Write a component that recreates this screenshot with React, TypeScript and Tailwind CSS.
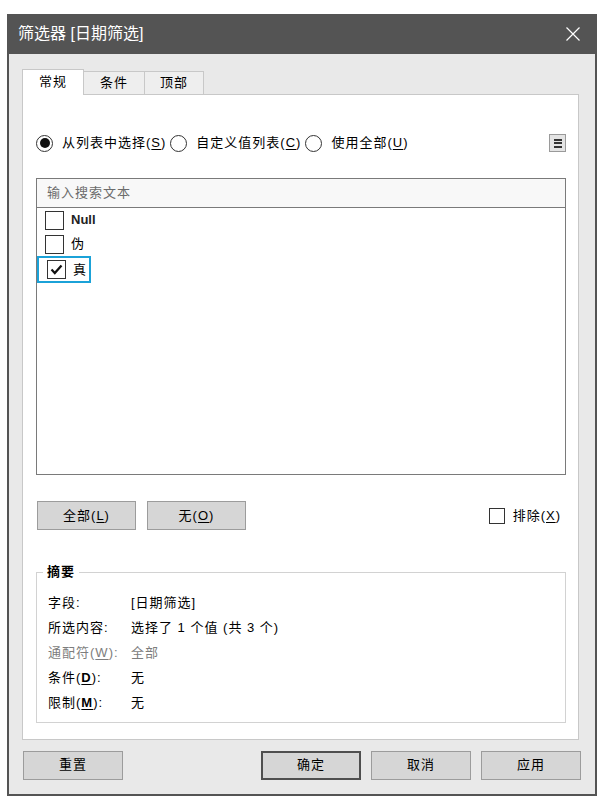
const FONT = "font-['Liberation_Sans','Noto_Sans_CJK_SC',sans-serif]";

function Radio({ on }: { on?: boolean }) {
  return (
    <span className="flex h-[17px] w-[17px] shrink-0 items-center justify-center rounded-full border border-[#333] bg-white">
      {on && <span className="h-[10px] w-[10px] rounded-full bg-[#111]" />}
    </span>
  );
}

function Box({ on, size = 19 }: { on?: boolean; size?: number }) {
  return (
    <span
      className="flex shrink-0 items-center justify-center border border-[#333] bg-white"
      style={{ width: size, height: size }}
    >
      {on && (
        <svg width="13" height="11" viewBox="0 0 13 11">
          <path d="M1.5 5.5 L4.8 9 L11.5 1.5" fill="none" stroke="#111" strokeWidth="2.2" />
        </svg>
      )}
    </span>
  );
}

function Btn({ children, w, main }: { children: React.ReactNode; w: string; main?: boolean }) {
  return (
    <button
      className={`flex h-[29px] ${w} items-center justify-center bg-[#d6d6d6] text-[13px] tracking-[1px] text-black ${
        main ? "border-2 border-[#4f4f4f]" : "border border-[#9c9c9c]"
      }`}
    >
      {children}
    </button>
  );
}

const U = ({ c }: { c: string }) => <span className="underline underline-offset-2">{c}</span>;

export default function App() {
  const items = [
    { label: "Null", on: false, latin: true },
    { label: "伪", on: false },
    { label: "真", on: true },
  ];

  return (
    <div className={`h-[805px] w-[603px] bg-white pl-[7px] pt-[14px] ${FONT}`}>
      <div className="flex h-[782px] w-[590px] flex-col">
        {/* title bar */}
        <div className="flex h-[40px] shrink-0 items-center justify-between bg-[#545454] pl-[11px] pr-[17px] text-[16px] text-white">
          <span>筛选器 [日期筛选]</span>
          <svg width="14" height="14" viewBox="0 0 14 14">
            <path d="M0.5 0.5 L13.5 13.5 M13.5 0.5 L0.5 13.5" stroke="#fff" strokeWidth="1.2" />
          </svg>
        </div>

        <div className="flex flex-1 flex-col border-x-2 border-b-2 border-[#545454] bg-[#e9e9e9] pl-[13px] pr-[16px] pt-[15px]">
          {/* tabs */}
          <div className="relative z-10 -mb-px flex h-[26px] items-end text-[13px] tracking-[1px] text-black">
            <div className="flex h-[26px] w-[62px] items-center justify-center border border-b-0 border-[#c8c8c8] bg-white pb-[2px]">
              常规
            </div>
            <div className="flex h-[24px] w-[61px] items-center justify-center border border-l-0 border-[#c8c8c8] bg-[#eeeeee]">
              条件
            </div>
            <div className="flex h-[24px] w-[59px] items-center justify-center border border-l-0 border-[#c8c8c8] bg-[#eeeeee]">
              顶部
            </div>
          </div>

          {/* panel */}
          <div className="flex h-[646px] flex-col border border-[#c8c8c8] bg-white pl-[13px] pr-[12px] text-[13px] tracking-[1px] text-black">
            <div className="mt-[39px] flex h-[18px] items-center">
              <Radio on />
              <span className="ml-[9px]">
                从列表中选择(<U c="S" />)
              </span>
              <span className="ml-[4px]">
                <Radio />
              </span>
              <span className="ml-[9px]">
                自定义值列表(<U c="C" />)
              </span>
              <span className="ml-[4px]">
                <Radio />
              </span>
              <span className="ml-[9px]">
                使用全部(<U c="U" />)
              </span>
              <span className="ml-auto flex h-[18px] w-[17px] flex-col items-center justify-center gap-[1.5px] border border-[#9a9a9a] bg-[#e4e4e4]">
                <span className="h-[2px] w-[8px] bg-[#333]" />
                <span className="h-[2px] w-[8px] bg-[#333]" />
                <span className="h-[2px] w-[8px] bg-[#333]" />
              </span>
            </div>

            {/* list */}
            <div className="mt-[26px] flex h-[297px] flex-col border border-[#7a7a7a]">
              <div className="flex h-[29px] shrink-0 items-center border-b border-[#7a7a7a] bg-[#f8f8f8] pl-[10px] text-[#6b6b6b]">
                输入搜索文本
              </div>
              <div className="flex flex-col">
                {items.map((it) => (
                  <div
                    key={it.label}
                    className={`flex w-[54px] items-center pl-[8px] ${
                      it.on ? "h-[27px] border-2 border-[#1ba2d8] pl-[6px]" : "h-[24px]"
                    }`}
                  >
                    <Box on={it.on} />
                    <span className={`ml-[7px] ${it.latin ? "font-semibold tracking-normal text-[#222]" : ""}`}>
                      {it.label}
                    </span>
                  </div>
                ))}
              </div>
            </div>

            {/* select buttons */}
            <div className="mt-[26px] flex h-[29px] items-center">
              <Btn w="w-[99px] ml-px">
                全部(<U c="L" />)
              </Btn>
              <span className="ml-[11px]">
                <Btn w="w-[99px]">
                  无(<U c="O" />)
                </Btn>
              </span>
              <span className="ml-auto mr-[5px] flex items-center">
                <Box size={16} />
                <span className="ml-[8px]">
                  排除(<U c="X" />)
                </span>
              </span>
            </div>

            {/* summary */}
            <fieldset className="mt-[33px] border border-[#d2d2d2] pb-[7px] pl-[11px]">
              <legend className="-ml-[5px] px-[4px] text-[13px] font-semibold leading-[18px]">摘要</legend>
              <div className="grid grid-cols-[83px_1fr] pt-[9px] leading-[25px]">
                <span>字段:</span>
                <span>[日期筛选]</span>
                <span>所选内容:</span>
                <span>选择了 1 个值 (共 3 个)</span>
                <span className="text-[#7d7d7d]">
                  通配符(<U c="W" />):
                </span>
                <span className="text-[#7d7d7d]">全部</span>
                <span>
                  条件(<span className="font-bold underline underline-offset-2">D</span>):
                </span>
                <span>无</span>
                <span>
                  限制(<span className="font-bold underline underline-offset-2">M</span>):
                </span>
                <span>无</span>
              </div>
            </fieldset>
          </div>

          {/* dialog buttons */}
          <div className="-mr-[2px] mt-[11px] flex h-[28px] items-center">
            <Btn w="w-[100px] ml-px h-[28px]">重置</Btn>
            <div className="ml-auto flex gap-[10px]">
              <Btn w="w-[100px]" main>
                确定
              </Btn>
              <Btn w="w-[100px]">取消</Btn>
              <Btn w="w-[100px]">应用</Btn>
            </div>
          </div>
        </div>
      </div>
    </div>
  );
}
